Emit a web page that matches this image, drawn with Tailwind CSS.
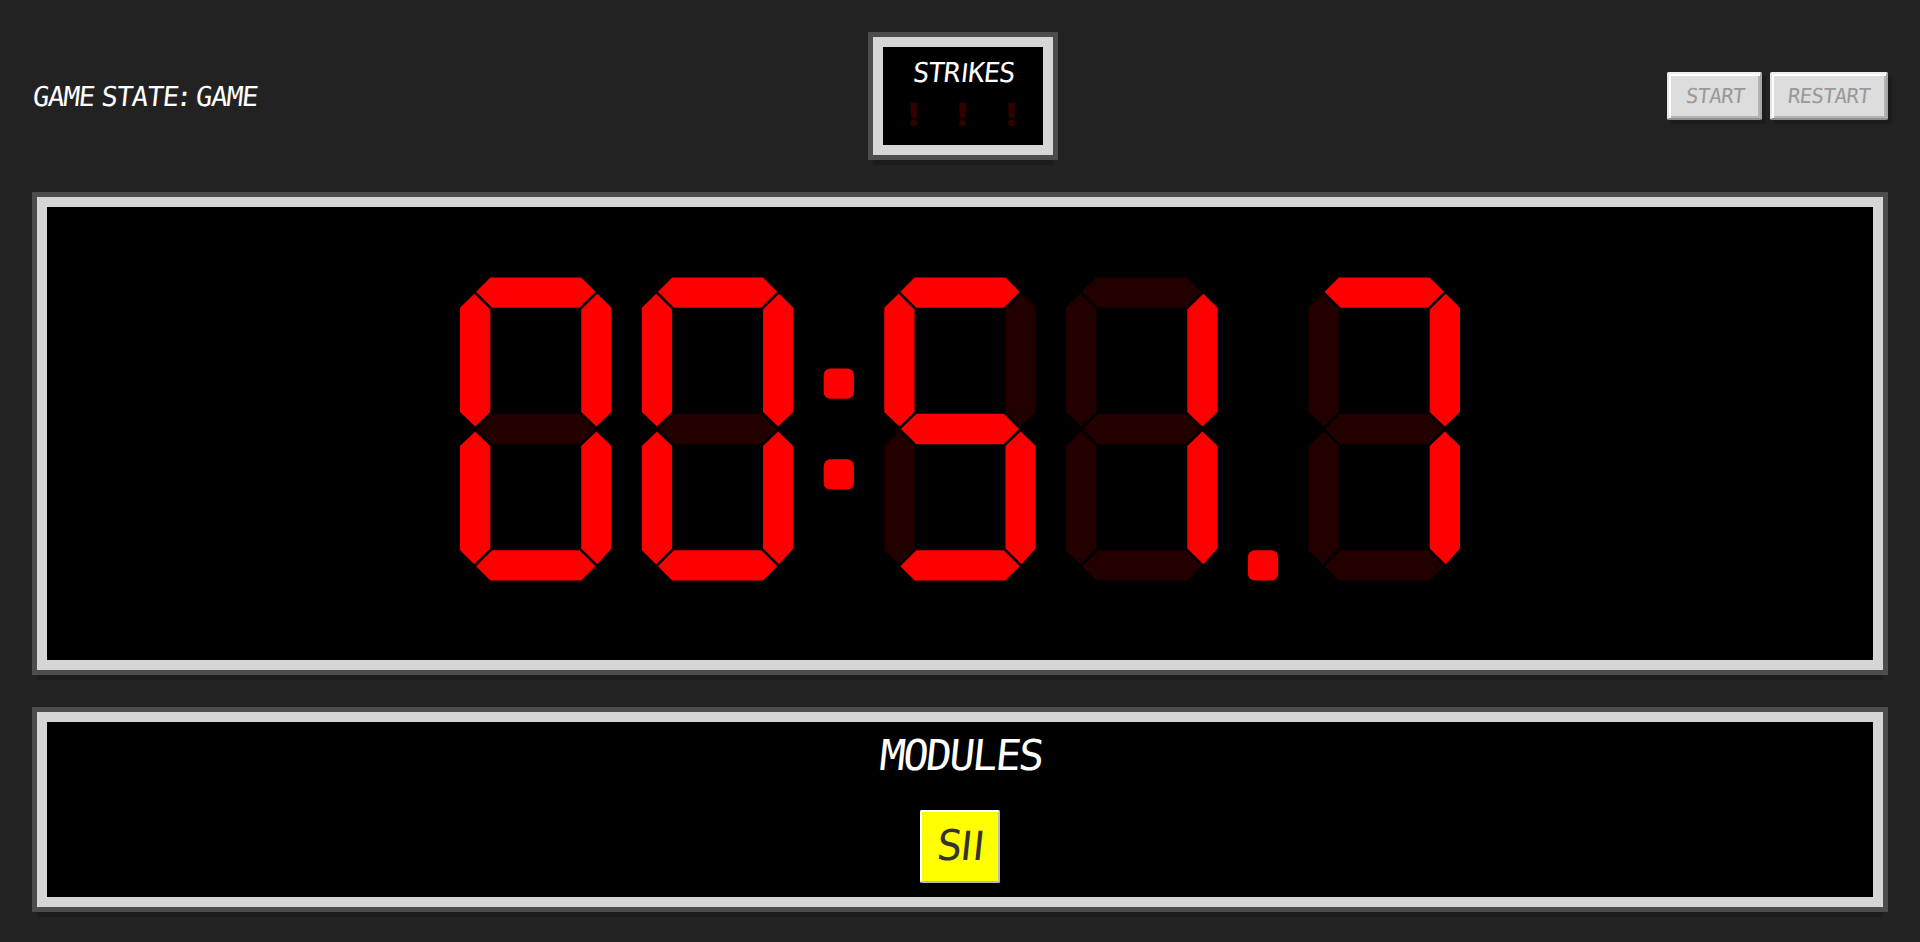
<!DOCTYPE html>
<html lang="en">
<head>
<meta charset="utf-8">
<title>Game timer</title>
<script src="https://cdn.jsdelivr.net/npm/@tailwindcss/browser@4"></script>
</head>
<body class="h-screen overflow-hidden bg-[#222] p-8 font-['DejaVu_Sans_Mono',monospace] text-white">
<svg class="hidden">
  <defs>
    <polygon id="a" points="10,0 40,0 44.7,4.7 39.4,10 10.6,10 5.3,4.7"/>
    <polygon id="b" points="45.3,5.4 50,10 50,44.4 45,49.2 40,44.4 40,10.6"/>
    <polygon id="c" points="45,50.8 50,55.6 50,89.4 45.3,94.6 40,89.4 40,55.6"/>
    <polygon id="d" points="10.6,90 39.4,90 44.7,95.3 40,100 10,100 5.3,95.3"/>
    <polygon id="e" points="5,50.8 10,55.6 10,89.4 4.7,94.6 0,90 0,55.6"/>
    <polygon id="f" points="4.7,5.4 10,10.6 10,44.4 5,49.2 0,44.4 0,10"/>
    <polygon id="g" points="10.6,45 39.4,45 44.5,50 39.4,55 10.6,55 5.5,50"/>
  </defs>
</svg>
<div class="flex h-full flex-col gap-8">
  <header class="grid h-32 shrink-0 grid-cols-[836px_190px_1fr] items-center">
    <div class="-skew-x-6 pt-px pl-px text-[27.4px] leading-8 tracking-[-1.2px] whitespace-nowrap"><span>GAME</span><span class="tracking-[-9.2px]"> </span>STATE<span class="-mx-[2px]">:</span><span class="tracking-[-9.6px]"> </span>GAME</div>
    <div class="p-[5px]">
      <div class="flex h-[118px] flex-col items-center border-10 border-[#d6d6d6] bg-black pt-[10px] shadow-[0_0_0_5px_#4d4d4d,0_10px_0_#1c1c1c]">
        <div class="-skew-x-6 pl-px text-[27.4px] leading-8 tracking-[-1.2px]">STR<span class="mr-[1px] ml-[2px] font-['Liberation_Sans']">I</span>KES</div>
        <div class="mt-[2px] flex w-full justify-between pr-[27px] pl-[26px] font-['Open_Sans','Noto_Sans',sans-serif] text-[32px] leading-[46px] font-extrabold text-[#330000] [-webkit-text-stroke:0.4px_#330000]"><span>!</span><span>!</span><span>!</span></div>
      </div>
    </div>
    <div class="flex justify-end gap-2 text-[20.6px] leading-none tracking-[-0.7px] text-[#999]">
      <button class="h-12 w-[95px] rounded-[2px] border-2 border-t-[#eee] border-r-[#a5a5a5] border-b-[#909090] border-l-[#e6e6e6] bg-[#ddd] shadow-[inset_2px_2px_0_#fff,inset_-2px_-2px_0_#b4b4b4,4px_4px_0_#1c1c1c]"><span class="inline-block -skew-x-6 pl-px">START</span></button>
      <button class="h-12 w-[118px] rounded-[2px] border-2 border-t-[#eee] border-r-[#a5a5a5] border-b-[#909090] border-l-[#e6e6e6] bg-[#ddd] shadow-[inset_2px_2px_0_#fff,inset_-2px_-2px_0_#b4b4b4,4px_4px_0_#1c1c1c]"><span class="inline-block -skew-x-6">RESTART</span></button>
    </div>
  </header>

  <main class="h-[483px] shrink-0 p-[5px]">
    <div class="flex h-[473px] justify-center border-10 border-[#d6d6d6] bg-black pt-[70px] shadow-[0_0_0_5px_#4d4d4d,0_10px_0_#1c1c1c]">
      <svg class="h-[304px] w-[1000px] fill-[#f00]" viewBox="0 -0.16 330 100.32">
        <g>
          <use href="#a"/><use href="#b"/><use href="#c"/><use href="#d"/><use href="#e"/><use href="#f"/><use href="#g" class="fill-[#200]"/>
        </g>
        <g transform="translate(60)">
          <use href="#a"/><use href="#b"/><use href="#c"/><use href="#d"/><use href="#e"/><use href="#f"/><use href="#g" class="fill-[#200]"/>
        </g>
        <rect x="120" y="30" width="10" height="10" rx="2.2"/>
        <rect x="120" y="60" width="10" height="10" rx="2.2"/>
        <g transform="translate(140)">
          <use href="#a"/><use href="#b" class="fill-[#200]"/><use href="#c"/><use href="#d"/><use href="#e" class="fill-[#200]"/><use href="#f"/><use href="#g"/>
        </g>
        <g transform="translate(200)">
          <use href="#a" class="fill-[#200]"/><use href="#b"/><use href="#c"/><use href="#d" class="fill-[#200]"/><use href="#e" class="fill-[#200]"/><use href="#f" class="fill-[#200]"/><use href="#g" class="fill-[#200]"/>
        </g>
        <rect x="260" y="90" width="10" height="10" rx="2.2"/>
        <g transform="translate(280)">
          <use href="#a"/><use href="#b"/><use href="#c"/><use href="#d" class="fill-[#200]"/><use href="#e" class="fill-[#200]"/><use href="#f" class="fill-[#200]"/><use href="#g" class="fill-[#200]"/>
        </g>
      </svg>
    </div>
  </main>

  <section class="h-[205px] shrink-0 p-[5px]">
    <div class="flex h-[195px] flex-col items-center border-10 border-[#d6d6d6] bg-black pt-2 shadow-[0_0_0_5px_#4d4d4d,0_10px_0_#1c1c1c]">
      <h2 class="-skew-x-6 pl-[2px] text-[42.4px] leading-[52px] tracking-[-2.4px]">MODULES</h2>
      <div class="mt-7 flex h-[73px] w-20 items-center justify-center rounded-[2px] border-2 border-t-white border-r-[#bbb] border-b-[#bbb] border-l-white bg-[#ff0] text-[42.4px] leading-none text-[#333]"><span class="-skew-x-6 pl-[3px] tracking-[-1.9px]">S<span class="font-['Liberation_Sans'] tracking-[0.6px]">II</span></span></div>
    </div>
  </section>
</div>
</body>
</html>
